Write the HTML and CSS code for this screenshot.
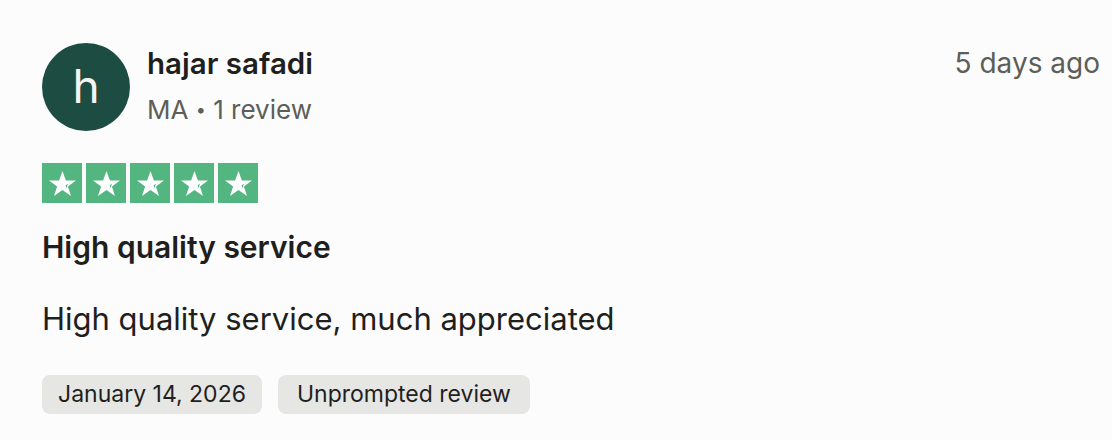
FILE: index.html
```html
<!DOCTYPE html>
<html>
<head>
<meta charset="utf-8">
<link rel="stylesheet" href="styles.css">
</head>
<body>
<article class="review">
  <header class="head">
    <div class="avatar">h</div>
    <div class="who">
      <div class="name">hajar safadi</div>
      <div class="meta">MA <span class="dot">•</span> 1 review</div>
    </div>
    <div class="ago">5 days ago</div>
  </header>
  <div class="stars">
    <span class="star"><svg viewBox="0 0 29 25"><path d="M14.5 0l3.4 9.5H28l-8.1 5.9 3.1 9.6-8.5-6.1L6 25l3.1-9.6L1 9.5h10.1z" fill="#fff"/><path d="M18.6 17.2l-.9-2.9 2.2-1.6z" fill="#53b580"/></svg></span>
    <span class="star"><svg viewBox="0 0 29 25"><path d="M14.5 0l3.4 9.5H28l-8.1 5.9 3.1 9.6-8.5-6.1L6 25l3.1-9.6L1 9.5h10.1z" fill="#fff"/><path d="M18.6 17.2l-.9-2.9 2.2-1.6z" fill="#53b580"/></svg></span>
    <span class="star"><svg viewBox="0 0 29 25"><path d="M14.5 0l3.4 9.5H28l-8.1 5.9 3.1 9.6-8.5-6.1L6 25l3.1-9.6L1 9.5h10.1z" fill="#fff"/><path d="M18.6 17.2l-.9-2.9 2.2-1.6z" fill="#53b580"/></svg></span>
    <span class="star"><svg viewBox="0 0 29 25"><path d="M14.5 0l3.4 9.5H28l-8.1 5.9 3.1 9.6-8.5-6.1L6 25l3.1-9.6L1 9.5h10.1z" fill="#fff"/><path d="M18.6 17.2l-.9-2.9 2.2-1.6z" fill="#53b580"/></svg></span>
    <span class="star"><svg viewBox="0 0 29 25"><path d="M14.5 0l3.4 9.5H28l-8.1 5.9 3.1 9.6-8.5-6.1L6 25l3.1-9.6L1 9.5h10.1z" fill="#fff"/><path d="M18.6 17.2l-.9-2.9 2.2-1.6z" fill="#53b580"/></svg></span>
  </div>
  <h2 class="title">High quality service</h2>
  <p class="body">High quality service, much appreciated</p>
  <div class="tags">
    <span class="tag">January 14, 2026</span>
    <span class="tag">Unprompted review</span>
  </div>
</article>
</body>
</html>
```
FILE: styles.css
```css
html, body {
  margin: 0;
  padding: 0;
  background: #fcfcfc;
}
body {
  font-family: Inter, "Liberation Sans", sans-serif;
  color: #1f1f1d;
}
.review {
  padding: 43px 12px 0 42px;
}
.head {
  display: flex;
  align-items: flex-start;
}
.avatar {
  width: 88px;
  height: 88px;
  border-radius: 50%;
  background: #1d4d42;
  color: #f4f4f0;
  font-size: 46px;
  font-weight: 400;
  line-height: 1;
  display: flex;
  align-items: center;
  justify-content: center;
  flex-shrink: 0;
  padding-bottom: 2px;
  box-sizing: border-box;
}
.who {
  margin-left: 17px;
  flex: 1;
  padding-top: 2px;
}
.name {
  font-size: 29.5px;
  font-weight: 600;
  line-height: 36px;
}
.meta {
  font-size: 26px;
  line-height: 34px;
  color: #5e5e58;
  margin-top: 12px;
}
.dot {
  font-size: 18px;
  vertical-align: 3px;
}
.ago {
  font-size: 28px;
  color: #5e5e58;
  line-height: 36px;
  padding-top: 2px;
}
.stars {
  display: flex;
  gap: 4px;
  margin-top: 32px;
}
.star {
  width: 40px;
  height: 40px;
  background: #53b580;
  display: flex;
  align-items: center;
  justify-content: center;
}
.star svg {
  width: 29px;
  height: 25px;
}
.title {
  margin: 26px 0 0;
  font-size: 30px;
  font-weight: 600;
  line-height: 36px;
}
.body {
  margin: 36px 0 0;
  font-size: 31px;
  line-height: 36px;
  font-weight: 400;
}
.tags {
  display: flex;
  gap: 16px;
  margin-top: 38px;
}
.tag {
  background: #e6e6e4;
  border-radius: 8px;
  font-size: 23px;
  line-height: 39px;
  padding: 0 16px;
}
.tag + .tag {
  padding: 0 19px;
}
```
